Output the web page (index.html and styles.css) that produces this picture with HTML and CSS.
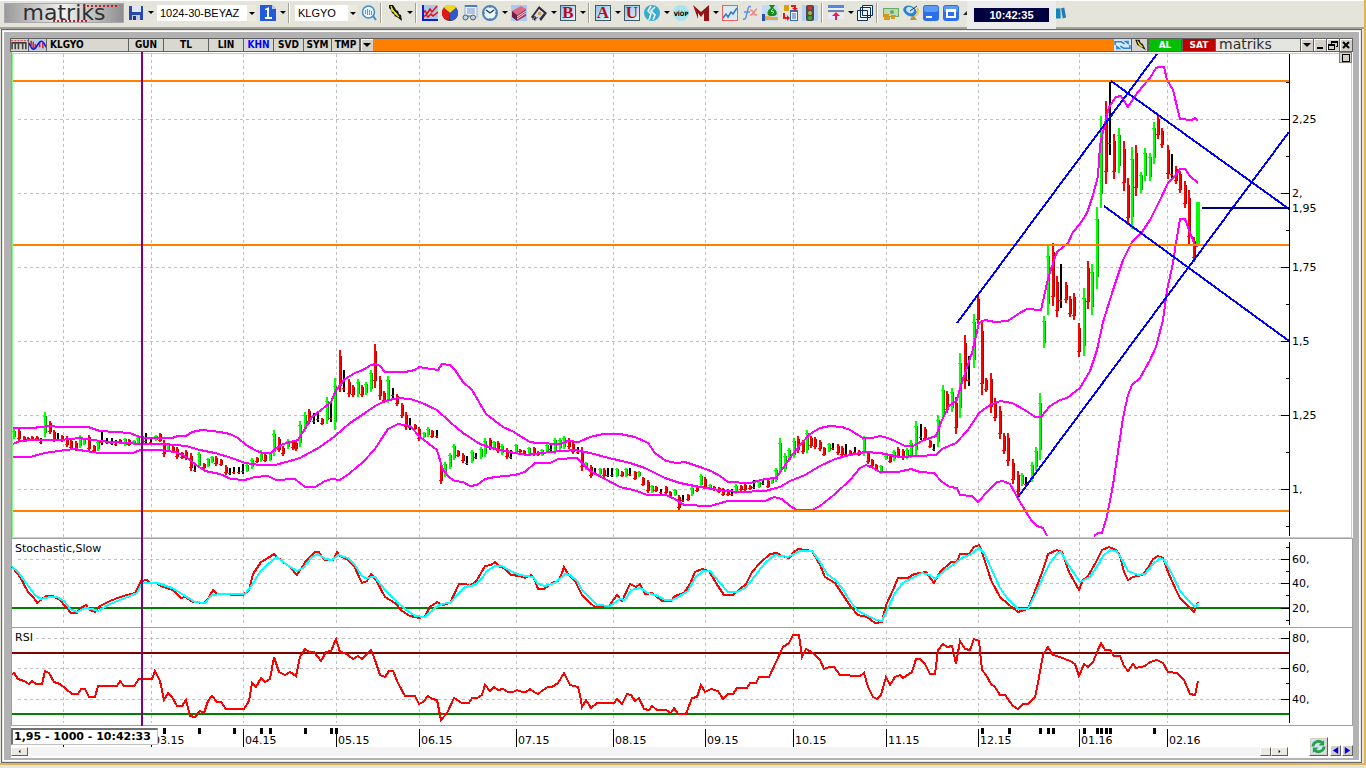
FILE: index.html
```html
<!DOCTYPE html>
<html lang="tr">
<head>
  <meta charset="UTF-8" />
  <title>Matriks - KLGYO</title>
  <link rel="stylesheet" href="styles.css">
</head>
<body>

  <header class="toolbar">
    <div class="logo">matriks</div>
    <button type="button" class="icon" aria-label="Kaydet">
      <svg viewBox="0 0 16 16"><rect x="1" y="1" width="14" height="14" fill="#2848b0"/><rect x="4" y="1" width="9" height="6" fill="#dde6fa"/><rect x="4" y="10" width="8" height="5" fill="#c8ccd8"/><rect x="5" y="11" width="3" height="4" fill="#203878"/></svg>
    </button>
    <button type="button" class="drop" aria-label="Kaydet menüsü"></button>
    <div class="combo combo-page">
      <select aria-label="Sayfa"><option>1024-30-BEYAZ</option></select>
    </div>
    <button type="button" class="icon" aria-label="Sayfa 1">
      <svg viewBox="0 0 16 16"><path d="M0 0h12l4 4v12H0z" fill="#2459d8"/><path d="M12 0l4 4h-4z" fill="#bcd4ff"/><path d="M5 4l4-2v10h3v2H5v-2h2V5H5z" fill="#fff"/></svg>
    </button>
    <button type="button" class="drop" aria-label="Sayfa listesi"></button>
    <span class="sep"></span>
    <div class="combo combo-symbol">
      <select aria-label="Sembol"><option>KLGYO</option></select>
    </div>
    <button type="button" class="icon" aria-label="Ara">
      <svg viewBox="0 0 16 16"><circle cx="7.500" cy="7" r="6" fill="#e8f3fa" stroke="#3a8ed0" stroke-width="1.500"/><path d="M12 11l3 4" stroke="#3a8ed0" stroke-width="2"/><path d="M4.500 5v4M6.500 4v6M8.500 5v5M10.500 6v4" stroke="#e86858"/></svg>
    </button>
    <span class="sep"></span>
    <button type="button" class="icon" aria-label="Hızlı emir">
      <svg viewBox="0 0 16 16"><path d="M2 0h4l2 3 1 2 2 1 1 3 2 1 1 6-5-4-3-1 1-1-3-2-1-3-2-2z" fill="#111"/><path d="M4 1l2 4 3 3 3 4-4-3-1-2-2-1z" fill="#f0e400" stroke="#f0e400"/></svg>
    </button>
    <button type="button" class="drop" aria-label="Emir menüsü"></button>
    <span class="sep"></span>
    <button type="button" class="icon" aria-label="Grafik">
      <svg viewBox="0 0 16 16"><rect width="16" height="16" fill="#a9c8ee"/><path d="M0 9l3-3 2 3 3-5 2 3 5-6" fill="none" stroke="#e01010" stroke-width="1.500"/><path d="M0 13l4-3 2 2 3-3 2 2 5-4" fill="none" stroke="#e01010" stroke-width="1.500"/><path d="M1 0v15h15" fill="none" stroke="#1020d0" stroke-width="2"/></svg>
    </button>
    <button type="button" class="icon" aria-label="Dağılım">
      <svg viewBox="0 0 16 16"><circle cx="8" cy="8" r="8" fill="#333"/><path d="M8 8L2 3a7 7 0 0 1 12 0z" fill="#f2d820"/><path d="M8 8L2 3a7 7 0 0 0 5 12z" fill="#e01818"/><path d="M8 8l6-5a7 7 0 0 1-6 12z" fill="#3058c8"/></svg>
    </button>
    <button type="button" class="icon" aria-label="Haber takip">
      <svg viewBox="0 0 16 16"><rect x="3" width="12" height="12" fill="#edf3fc" stroke="#90aee0"/><path d="M3 1h12" stroke="#4a7ad8" stroke-width="2"/><path d="M5 4h8M5 6h8M5 8h8" stroke="#7a95b8"/><circle cx="3.500" cy="12.500" r="2.500" fill="#bcd4e8" stroke="#53606c"/><circle cx="11" cy="12.500" r="2.500" fill="#bcd4e8" stroke="#53606c"/><path d="M5 11h4" stroke="#53606c"/></svg>
    </button>
    <button type="button" class="icon" aria-label="Saat">
      <svg viewBox="0 0 16 16"><circle cx="8" cy="8" r="7" fill="#e9f5ff" stroke="#4b82b4" stroke-width="2"/><path d="M8 8L4 5M8 8l4-3" stroke="#28425c" stroke-width="1.500"/><path d="M8 2v1M8 13v1M2 8h1M13 8h1" stroke="#28425c"/></svg>
    </button>
    <button type="button" class="drop" aria-label="Saat menüsü"></button>
    <button type="button" class="icon" aria-label="Kitap">
      <svg viewBox="0 0 16 16"><rect width="16" height="16" fill="#a9c8f2"/><path d="M1 6l9-5 5 3-9 6z" fill="#e06880"/><path d="M1 6l5 4v6l-5-4z" fill="#6b1d48"/><path d="M6 10l9-6v7l-9 5z" fill="#b03858"/><path d="M6 12l9-6M6 14l9-6" stroke="#f3d6e0"/></svg>
    </button>
    <button type="button" class="icon" aria-label="Defter">
      <svg viewBox="0 0 16 16"><path d="M0 12L8 1l8 7-6 8-3-4-3 4z" fill="#303038"/><path d="M3 11l5-7 5 4-5 6z" fill="#dcd4ea"/><path d="M7 7h3v3H7z" fill="#c8a060"/><path d="M1 15l4-4M3 16l4-4" stroke="#888"/></svg>
    </button>
    <button type="button" class="drop" aria-label="Defter menüsü"></button>
    <button type="button" class="icon letter">B</button>
    <button type="button" class="drop" aria-label="B menüsü"></button>
    <span class="sep"></span>
    <button type="button" class="icon letter">A</button>
    <button type="button" class="drop" aria-label="A menüsü"></button>
    <button type="button" class="icon letter">U</button>
    <button type="button" class="icon" aria-label="Borsa">
      <svg viewBox="0 0 16 16"><circle cx="8" cy="8" r="8" fill="#36acd0"/><path d="M7 1L4 6l3 3-2 6M11 2L7 6l4 4-2 5" fill="none" stroke="#fff" stroke-width="1.500"/></svg>
    </button>
    <button type="button" class="drop" aria-label="Borsa menüsü"></button>
    <button type="button" class="icon" aria-label="VİOP">
      <svg viewBox="0 0 16 16"><circle cx="8" cy="8" r="8" fill="#a8e4ee"/><text x="8" y="11" text-anchor="middle" class="viop">VİOP</text></svg>
    </button>
    <button type="button" class="icon" aria-label="Matriks">
      <svg viewBox="0 0 16 16"><path d="M0 0l8 7 8-7v16h-5V8l-3 4-3-4v6z" fill="#941418"/></svg>
    </button>
    <button type="button" class="drop" aria-label="Matriks menüsü"></button>
    <button type="button" class="icon" aria-label="Teknik analiz">
      <svg viewBox="0 0 16 16"><rect x=".5" y=".5" width="15" height="15" fill="#dceaf2" stroke="#f06060"/><path d="M1 13l3-4 2 3 3-5 2 2 4-6" fill="none" stroke="#3a78c0" stroke-width="1.500"/></svg>
    </button>
    <button type="button" class="icon" aria-label="Formül">
      <svg viewBox="0 0 16 16"><path d="M9 2C6 0 6 4 5 8s-1 7-4 6M2 7h6" fill="none" stroke="#5b92e0" stroke-width="1.500"/><path d="M8 5c4-1 2 6 7 5M15 4c-2 0-4 7-7 6" fill="none" stroke="#f08080" stroke-width="1.500"/></svg>
    </button>
    <button type="button" class="icon" aria-label="Portföy">
      <svg viewBox="0 0 16 16"><rect width="16" height="16" fill="#c2dcf8"/><path d="M7 0h6l-2 3c5 3 5 8 0 8H8C4 10 5 5 9 3z" fill="#188818"/><path d="M11 4l-2 2 3 1-2 2" fill="none" stroke="#e4f050"/><path d="M0 11h6l4 1h6v3H0z" fill="#e8a848"/><path d="M0 9h3v7H0z" fill="#2850b0"/></svg>
    </button>
    <button type="button" class="icon" aria-label="Aktar">
      <svg viewBox="0 0 16 16"><rect x="8" y="5" width="8" height="11" fill="#3468b8"/><rect x="9" y="7" width="6" height="8" fill="#f4f7ff"/><path d="M10 9h4M10 11h4M10 13h4" stroke="#3468b8"/><path d="M2 1h5M2 3h5M2 5h5" stroke="#d8a010" stroke-width="2"/><path d="M9 1h4v3M2 8v5h3" fill="none" stroke="#e81818" stroke-width="2"/><path d="M5 10l3 3-3 3zM10 3h6l-3 3z" fill="#e81818"/></svg>
    </button>
    <button type="button" class="icon" aria-label="Trafik">
      <svg viewBox="0 0 16 16"><rect width="16" height="16" fill="#b5d2f6"/><rect x="4" width="8" height="16" rx="2" fill="#4e4e48"/><circle cx="8" cy="3" r="2" fill="#e83020"/><circle cx="8" cy="8" r="2" fill="#b0b040"/><circle cx="8" cy="13" r="2" fill="#28b828"/></svg>
    </button>
    <span class="sep"></span>
    <button type="button" class="icon" aria-label="Satır ekle">
      <svg viewBox="0 0 16 16"><path d="M0 0h16v3H0z" fill="#5088e0"/><path d="M0 3h16v2H0z" fill="#e4f0ff"/><path d="M0 5h16v2H0z" fill="#7080b0"/><path d="M0 8h16v6H0z" fill="#e8ecf0"/><path d="M8 7l4 4H9v4H7v-4H4z" fill="#e0205c"/></svg>
    </button>
    <button type="button" class="drop" aria-label="Satır menüsü"></button>
    <button type="button" class="icon" aria-label="Pencereler">
      <svg viewBox="0 0 16 16"><path d="M5.500 .5h10v10h-10zM3.500 2.500h10v10h-10zM.5 5.500h10v10H.5z" fill="#eef6ff" stroke="#0c2c60"/></svg>
    </button>
    <span class="sep"></span>
    <button type="button" class="icon" aria-label="Para">
      <svg viewBox="0 0 16 16"><rect y="3" width="16" height="9" fill="#68a868"/><rect x="1" y="4" width="14" height="7" fill="#bcdcae"/><circle cx="9" cy="7" r="2" fill="#68a868"/><path d="M1 10h5M1 12h6M1 14h6M8 11h5M8 13h4" stroke="#d89820" stroke-width="2"/></svg>
    </button>
    <button type="button" class="icon" aria-label="Çanak">
      <svg viewBox="0 0 16 16"><ellipse cx="7" cy="6" rx="7" ry="5" fill="#2c80d8" transform="rotate(25 7 6)"/><ellipse cx="7" cy="5" rx="4" ry="3" fill="#bce8fc" transform="rotate(25 7 5)"/><path d="M14 1L7 6" stroke="#203858"/><path d="M9 11h2l3 4H7z" fill="#b09450"/><path d="M14 3c2 3 1 6-2 8" fill="none" stroke="#eccc50" stroke-width="2"/></svg>
    </button>
    <button type="button" class="icon" aria-label="Simge durumu">
      <svg viewBox="0 0 16 16"><rect width="16" height="16" rx="3" fill="#2b70ea"/><rect x="1" y="1" width="14" height="6" rx="2" fill="#5c9bf6"/><rect x="3" y="11" width="6" height="2" fill="#fff"/></svg>
    </button>
    <button type="button" class="icon" aria-label="Ekranı kapla">
      <svg viewBox="0 0 16 16"><rect width="16" height="16" rx="3" fill="#2b70ea"/><rect x="1" y="1" width="14" height="6" rx="2" fill="#5c9bf6"/><path d="M3 4h10v9H3z" fill="#fff"/><path d="M5 7h6v4H5z" fill="#2b70ea"/></svg>
    </button>
    <span class="bell"></span>
    <time class="clock"><span>10:42:35</span></time>
    <svg class="books" viewBox="0 0 12 12"><path d="M0 1h5v11H0z" fill="#1684b8"/><path d="M5 1l4-1 2 11-4 1z" fill="#2878b0"/><path d="M5 1l2 11" stroke="#b0dcee"/></svg>
  </header>

  <main class="window">
    <div class="titlebar">
      <button type="button" class="tb-icon" aria-label="Menü">
        <svg viewBox="0 0 16 10"><path d="M1 9V3h6v6M7 3h7v6M4 3v6M11 3v6" fill="none" stroke="#444" stroke-width="1.500"/><path d="M0 1h16" stroke="#d84040" stroke-dasharray="2 1"/></svg>
      </button>
      <button type="button" class="tb-icon" aria-label="Gösterge">
        <svg viewBox="0 0 16 10"><rect width="16" height="10" fill="#b8ccec"/><path d="M2 1v5M4 2v6M6 4v4M10 2v5M13 3v5" stroke="#e02020" stroke-width="1.500"/><path d="M0 3c3 8 5 7 8 2s5-5 8 2" fill="none" stroke="#1818e0" stroke-width="1.500"/></svg>
      </button>
      <button type="button" class="cell cell-symbol">KLGYO</button>
      <button type="button" class="cell">GUN</button>
      <button type="button" class="cell cell-wide">TL</button>
      <button type="button" class="cell">LIN</button>
      <button type="button" class="cell cell-small active">KHN</button>
      <button type="button" class="cell cell-small">SVD</button>
      <button type="button" class="cell cell-tight">SYM</button>
      <button type="button" class="cell cell-tight">TMP</button>
      <button type="button" class="win-btn" aria-label="Diğer"><svg viewBox="0 0 12 10"><path d="M2 3h8L6 7z"/></svg></button>
      <span class="strip"></span>
      <button type="button" class="tb-icon" aria-label="Yenile">
        <svg viewBox="0 0 16 10"><rect width="16" height="10" fill="#d6e8fa"/><path d="M1 5V2h6l3 2M15 5v3H9L6 6" fill="none" stroke="#3088d0" stroke-width="1.500"/><path d="M9 1h5v4zM2 9V5l5 4z" fill="#3088d0"/></svg>
      </button>
      <button type="button" class="tb-icon tb-bolt" aria-label="Emir">
        <svg viewBox="0 0 14 10"><path d="M3 0h4l1 3 2 1 3 6-6-4-2-1z" fill="#111"/><path d="M5 1l2 3 3 3-3-2z" fill="#f0e400" stroke="#f0e400"/></svg>
      </button>
      <button type="button" class="order buy">AL</button>
      <button type="button" class="order sell">SAT</button>
      <span class="brand">matriks</span>
      <button type="button" class="win-btn" aria-label="Liste"><svg viewBox="0 0 12 10"><path d="M2 3h8L6 7z"/></svg></button>
      <button type="button" class="win-btn" aria-label="Küçült"><svg viewBox="0 0 12 10"><path d="M3 7h6v2H3z"/></svg></button>
      <button type="button" class="win-btn" aria-label="Önceki boyut"><svg viewBox="0 0 12 10"><path d="M4 1h7v6H9V6h1V3H5v1H4zM1 4h7v6H1zM2 6v3h5V6z" fill-rule="evenodd"/></svg></button>
      <button type="button" class="win-btn" aria-label="Kapat"><svg viewBox="0 0 12 10"><path d="M3 2l6 6M9 2L3 8" stroke="#000" stroke-width="2"/></svg></button>
    </div>

    <div class="charts">
      <button type="button" class="maximize" aria-label="Paneli büyüt"></button>
      <svg class="panel" id="price" viewBox="11 52 1342 487"></svg>
      <svg class="panel" id="stoch" viewBox="11 539 1342 89"></svg>
      <svg class="panel" id="rsi" viewBox="11 628 1342 98"></svg>
      <svg class="panel" id="months" viewBox="11 726 1342 21"></svg>
      <div class="scroll">
        <button type="button" class="scroll-btn" aria-label="Sola kaydır"><svg viewBox="0 0 8 8"><path d="M5 2v4L3 4z"/></svg></button>
        <div class="track"></div>
        <button type="button" class="thumb" aria-label="Konum"></button>
        <button type="button" class="scroll-btn" aria-label="Sağa kaydır"><svg viewBox="0 0 8 8"><path d="M3 2v4l2-2z"/></svg></button>
        <div class="nav">
          <button type="button" class="refresh" aria-label="Yenile">
            <svg viewBox="0 0 16 16"><rect width="16" height="16" fill="#cfe4f4"/><path d="M2 8a6 6 0 0 1 10-4" fill="none" stroke="#28a048" stroke-width="3"/><path d="M14 8a6 6 0 0 1-10 4" fill="none" stroke="#28a048" stroke-width="3"/><path d="M14 1v6H8zM2 15V9h6z" fill="#28a048"/></svg>
          </button>
          <button type="button" class="nav-btn" aria-label="Geri"><svg viewBox="0 0 10 10"><path d="M8 1v8L2 5z"/></svg></button>
          <button type="button" class="nav-btn" aria-label="İleri"><svg viewBox="0 0 10 10"><path d="M2 1v8l6-4z"/></svg></button>
        </div>
      </div>
      <output class="status">1,95 - 1000 - 10:42:33</output>
    </div>
  </main>

  <script src="chart.js"></script>
</body>
</html>
```

FILE: styles.css
```css
* {
  box-sizing: border-box;
}

body {
  margin: 0;
  background: #e4e4da;
  border-right: 2px solid #e0b25c;
  border-bottom: 2px solid #e0b25c;
  font-family: "DejaVu Sans", Verdana, sans-serif;
}

button {
  margin: 0;
  padding: 0;
  border: none;
  background: none;
  font-family: inherit;
  color: #000;
}

/* toolbar */

.toolbar {
  display: flex;
  align-items: center;
  gap: 4px;
  height: 29px;
  padding: 0 0 3px 4px;
  border-top: 1px solid #fff;
  border-bottom: 2px solid #a2a29a;
}

.logo {
  position: relative;
  width: 120px;
  height: 20px;
  background: linear-gradient(90deg, #9a9a9a, #f2f2f2 50%, #8e8e8e);
  border: 1px solid #a8a8a8;
  color: #303030;
  font-size: 22px;
  line-height: 18px;
  text-align: center;
  flex: none;
}

.logo::before,
.logo::after {
  content: "";
  position: absolute;
  width: 34px;
  border-top: 2px dotted #c81c28;
}

.logo::before {
  top: 1px;
  right: 6px;
}

.logo::after {
  bottom: 0;
  left: 48px;
}

.icon {
  width: 16px;
  height: 16px;
  flex: none;
}

.icon svg {
  display: block;
  width: 16px;
  height: 16px;
}

.letter {
  background: linear-gradient(135deg, #8cc4ec, #e4f8f8);
  border: 1px solid #405868;
  color: #b80c14;
  font-family: "Liberation Serif", serif;
  font-size: 17px;
  font-weight: bold;
  line-height: 14px;
}

.viop {
  font-family: "DejaVu Sans Condensed", sans-serif;
  font-size: 6px;
  font-weight: bold;
}

.drop {
  width: 9px;
  height: 16px;
  margin-left: -4px;
  position: relative;
  flex: none;
}

.drop::after,
.combo::after {
  content: "";
  display: block;
  width: 0;
  border: 3px solid transparent;
  border-top-color: #000;
  border-bottom: none;
}

.drop::after {
  margin-left: 4px;
}

.combo {
  position: relative;
  height: 16px;
  background: #fff;
  flex: none;
}

.combo::after {
  position: absolute;
  right: 1px;
  top: 7px;
}

.combo select {
  display: block;
  appearance: none;
  width: 100%;
  height: 16px;
  padding: 0 10px 0 3px;
  border: none;
  border-radius: 0;
  background: linear-gradient(270deg, #eceade 9px, #fff 9px);
  font-family: "Liberation Sans", Arial, sans-serif;
  font-size: 11px;
  line-height: 16px;
  color: #000;
}

.combo-page {
  width: 99px;
}

.combo-symbol {
  width: 62px;
}

.sep {
  width: 2px;
  height: 20px;
  margin: 0 1px 0 -1px;
  border-left: 1px solid #a0a098;
  border-right: 1px solid #fff;
  flex: none;
}

.bell {
  width: 0;
  border-bottom: 4px solid #222;
  border-left: 4px solid transparent;
}

.clock {
  display: flex;
  align-items: center;
  align-self: flex-start;
  width: 89px;
  height: 28px;
  margin-left: -4px;
  padding: 0 7px;
  background: #ececec;
  z-index: 1;
  flex: none;
}

.clock span {
  width: 100%;
  background: #000040;
  color: #fff;
  font-family: "Liberation Sans", Arial, sans-serif;
  font-size: 11px;
  font-weight: bold;
  line-height: 14px;
  text-align: center;
}

.books {
  width: 11px;
  height: 12px;
  margin-left: -4px;
}

/* chart window */

.window {
  margin: 0 2px 0 1px;
  padding: 8px 8px 4px;
  border: 1px solid #696969;
  background: #b2b2b2;
  box-shadow: inset 0 0 0 1px #e6e6e6, inset 0 0 0 2px #fff;
}

.titlebar {
  display: flex;
  height: 14px;
  border: 1px solid #606060;
  background: #606060;
}

.tb-icon {
  width: 17px;
  background: #d6d3cc;
  margin-right: 1px;
}

.tb-icon svg {
  display: block;
  width: 100%;
  height: 12px;
}

.tb-bolt {
  width: 15px;
}

.cell {
  width: 34px;
  margin-right: 1px;
  background: #d8d8d0;
  font-family: "DejaVu Sans Condensed", Tahoma, sans-serif;
  font-size: 10px;
  font-weight: bold;
  line-height: 12px;
}

.cell-symbol {
  width: 81px;
  padding-left: 3px;
  text-align: left;
}

.cell-wide {
  width: 44px;
}

.cell-small {
  width: 29px;
}

.cell-tight {
  width: 27px;
}

.active {
  color: #00f;
}

.strip {
  flex: 1;
  background: #ff8000;
}

.order {
  width: 32px;
  margin: 0 1px;
  color: #fff;
  font-size: 9px;
  font-weight: bold;
  line-height: 12px;
}

.buy {
  background: #00c000;
}

.sell {
  background: #c00000;
}

.brand {
  width: 84px;
  padding-left: 3px;
  background: #e4e4e0;
  color: #303030;
  font-size: 14px;
  line-height: 11px;
}

.win-btn {
  width: 12px;
  margin-left: 1px;
  background: #d4d0c8;
  box-shadow: inset 1px 1px #fff;
}

.win-btn svg {
  display: block;
  width: 100%;
  height: 12px;
}

.charts {
  position: relative;
  margin: 0 0 0 1px;
  background: #fff;
}

.panel {
  display: block;
  width: 100%;
  height: auto;
  font-size: 11px;
}

.maximize {
  position: absolute;
  right: 1px;
  top: 0;
  width: 13px;
  height: 11px;
  border: 1px solid #808080;
  background: #d4d0c8;
}

.maximize::after {
  content: "";
  display: block;
  width: 6px;
  height: 6px;
  margin: 0 auto;
  border: 1px solid #000;
}

.status {
  position: absolute;
  left: 0;
  bottom: 13px;
  width: 147px;
  height: 17px;
  padding-left: 1px;
  border: 1px solid #c0c0c0;
  border-left: 2px solid #707070;
  border-top: 2px solid #707070;
  background: #fff;
  font-size: 11px;
  font-weight: bold;
  line-height: 14px;
  white-space: nowrap;
}

.scroll {
  display: flex;
  height: 11px;
  padding-bottom: 2px;
}

.scroll-btn,
.thumb,
.nav-btn {
  background: #ece9e4;
  border: 1px solid #fff;
  border-right-color: #606060;
  border-bottom-color: #606060;
}

.scroll-btn {
  width: 17px;
}

.scroll-btn svg {
  display: block;
  height: 7px;
  margin: 0 auto;
}

.thumb {
  width: 11px;
}

.track {
  flex: 1;
  background: #f4f4f4;
}

.nav {
  display: flex;
  align-items: flex-end;
  gap: 1px;
  width: 65px;
  padding-left: 21px;
  position: relative;
  z-index: 1;
}

.refresh {
  width: 19px;
  height: 19px;
  margin-right: 1px;
  padding: 1px;
  border: 1px solid #fff;
  border-right-color: #606060;
  border-bottom-color: #606060;
  background: #d4d0c8;
  flex: none;
}

.refresh svg {
  display: block;
}

.nav-btn {
  width: 11px;
  height: 11px;
  background: #d4d0c8;
  flex: none;
}

.nav-btn svg {
  display: block;
  fill: #0000d8;
}
```

FILE: chart.js
```js
const AXIS = 1289;
const monthMarks = [
  [63, ''], [151, '03.15'], [243, '04.15'], [336, '05.15'], [419, '06.15'],
  [516, '07.15'], [613, '08.15'], [705, '09.15'], [793, '10.15'], [886, '11.15'],
  [978, '12.15'], [1079, '01.16'], [1167, '02.16']
];

// x, high, low, colour
const bars = `14 429 439 g,19 429 441 r,24 436 442 r,28 437 441 r,32 436 441 r,37 436 440 r,41 438 444 k,45 412 437 g,
50 421 434 r,54 430 442 r,58 433 441 k,62 435 442 r,67 436 447 r,71 440 449 r,76 441 451 r,80 435 448 g,84 438 445 g,
89 435 451 r,94 445 452 r,98 440 451 g,102 432 445 k,107 438 444 k,112 438 445 k,116 440 446 k,120 439 444 r,
125 438 446 g,129 439 446 r,134 440 445 g,138 437 444 g,142 434 445 g,146 433 444 k,151 437 444 k,156 435 441 g,
160 433 442 r,164 440 457 r,168 444 451 g,173 446 453 r,177 447 459 r,182 452 459 r,186 450 460 r,191 453 471 r,
195 464 472 k,199 452 468 g,204 463 469 r,208 458 467 g,212 456 463 g,216 456 466 r,221 459 466 r,226 465 475 r,
230 468 475 k,234 467 474 k,239 467 474 k,243 464 474 k,247 464 472 g,252 458 469 g,257 457 463 r,261 450 462 g,
265 454 462 r,270 452 461 g,274 430 456 g,279 437 452 r,283 446 456 r,288 439 449 g,293 440 450 r,296 441 451 r,
300 421 447 g,305 412 432 g,309 409 424 r,314 413 424 k,318 412 422 k,322 418 425 r,327 397 424 g,331 403 422 k,
335 378 430 g,340 350 392 r,344 370 392 k,349 379 397 r,353 385 397 r,358 379 397 g,362 385 397 r,366 382 395 g,
371 370 392 g,375 344 388 r,380 376 400 r,384 391 403 r,388 376 403 g,393 388 398 k,397 394 406 r,402 403 418 r,
406 412 430 r,410 418 430 k,415 424 430 r,419 427 441 r,424 432 438 g,428 427 437 g,432 430 438 r,437 430 438 k,
441 463 484 r,445 462 477 g,450 453 469 g,454 444 460 g,458 450 457 r,463 453 463 r,467 456 465 k,472 450 463 g,
476 453 459 k,481 447 459 g,485 438 457 g,490 438 450 r,494 441 450 g,498 441 453 r,502 444 455 g,507 448 459 r,
511 450 459 k,516 444 453 g,520 449 453 r,524 450 455 r,529 447 455 g,534 447 456 r,538 451 456 r,542 449 456 g,
547 443 453 g,551 443 451 k,555 438 454 g,560 438 450 g,564 436 449 g,569 438 449 r,573 442 454 r,578 447 454 k,
582 447 471 r,586 462 470 g,591 465 478 r,595 468 475 k,600 468 475 g,604 468 478 r,608 468 477 k,612 468 477 k,
617 468 477 g,622 471 477 r,626 468 477 g,630 468 476 k,635 471 480 r,639 471 477 g,643 477 486 r,648 480 493 r,
652 485 493 g,656 486 492 r,661 489 494 k,666 486 494 r,670 491 498 r,675 489 496 g,679 495 510 r,683 495 502 k,
688 494 501 r,692 486 496 g,697 486 492 r,701 474 487 g,705 477 489 r,710 484 489 g,714 486 491 r,719 487 493 r,
723 488 496 r,728 489 496 r,732 489 496 k,736 484 494 g,741 485 491 r,745 484 491 r,750 485 490 r,754 480 489 k,
759 481 488 g,763 480 485 k,768 480 488 r,772 477 484 g,776 468 482 g,780 438 474 g,785 453 472 g,789 448 462 g,
794 438 458 g,798 436 453 r,803 440 454 r,807 430 453 g,811 436 448 r,815 437 449 r,820 440 451 r,824 447 456 r,
829 443 452 g,833 443 450 k,838 444 455 r,842 446 457 r,846 444 457 k,850 450 456 r,855 447 454 k,859 450 456 r,
864 436 456 g,868 451 464 r,872 459 467 r,876 464 471 r,881 465 474 g,886 455 460 g,890 455 463 r,894 450 461 g,
898 447 458 r,903 449 460 r,907 448 459 g,911 440 458 g,916 421 455 g,921 424 440 k,925 427 441 r,930 440 448 r,
934 444 451 k,938 415 447 g,943 385 418 g,947 391 413 r,952 388 412 g,956 397 434 r,960 353 418 g,965 335 389 r,
969 356 386 k,974 314 368 g,978 295 324 r,982 320 395 r,986 378 392 r,991 373 413 r,995 398 421 r,1000 406 439 r,
1004 433 454 r,1008 433 466 r,1013 459 484 r,1018 471 496 r,1022 473 486 g,1026 477 487 k,1032 462 482 g,
1036 447 471 g,1040 393 460 g,1044 316 348 g,1048 245 315 g,1053 243 306 r,1057 276 317 r,1061 264 308 k,
1066 282 303 r,1070 296 317 r,1074 293 320 r,1079 323 357 r,1084 288 356 g,1088 261 309 r,1092 264 315 g,
1097 207 289 g,1101 116 208 g,1106 101 184 r,1110 81 155 k,1114 134 179 r,1119 128 173 g,1124 141 191 r,
1128 178 225 r,1132 147 229 g,1136 145 196 r,1141 172 193 g,1145 148 181 g,1150 153 181 g,1154 122 164 g,
1158 115 139 r,1162 128 148 r,1168 145 179 r,1172 154 179 k,1176 166 184 r,1180 171 193 r,1185 181 208 r,
1189 190 245 r,1194 237 262 r`;

const bollinger = [
  `13,428 32,428 50,426 60,427 88,427 100,431 130,433 142,438 172,438 178,436 186,436 192,432 202,430 220,432 230,434
  238,438 246,445 255,450 262,453 271,453 275,449 283,444 298,440 304,430 312,417 321,410 331,402 336,390 345,379
  355,373 363,370 371,365 376,364 380,366 385,372 405,372 415,370 419,367 425,368 438,370 442,364 450,365 455,370
  463,382 472,390 486,414 503,427 512,431 530,442 537,443 560,444 568,441 579,442 590,437 603,434 620,434 635,437
  648,443 655,453 666,461 677,463 685,462 700,467 711,471 720,476 728,482 750,483 765,479 776,478 783,468 790,458
  800,445 810,434 820,428 830,426 842,427 850,430 863,438 872,438 880,436 888,438 895,441 905,446 913,446 922,441
  930,438 936,436 942,420 949,406 957,400 961,385 972,353 979,323 985,320 995,322 1008,321 1018,314 1027,309
  1041,310 1047,283 1050,272 1057,252 1068,243 1073,232 1080,224 1087,213 1093,195 1098,176 1100,145 1104,128
  1109,107 1116,97 1121,96 1128,107 1135,96 1143,86 1150,78 1156,68 1159,67 1164,67 1167,80 1173,90 1180,119
  1192,120 1195,118 1198,121`,
  `13,444 20,441 35,440 60,440 80,438 100,441 125,443 142,444 165,444 186,446 200,450 215,453 232,458 245,463 260,465
  275,465 290,461 300,458 320,447 335,436 350,423 365,413 375,406 385,401 398,398 410,399 420,402 437,410 450,422
  463,433 480,444 495,449 515,453 527,455 550,452 575,450 590,453 605,457 630,463 645,468 665,478 680,483 700,487
  725,491 740,492 765,491 780,487 790,481 805,475 820,466 835,459 850,455 865,452 880,453 900,457 936,455 942,449
  956,443 968,430 979,413 990,405 1000,401 1012,403 1025,410 1035,417 1041,417 1050,406 1060,400 1067,398 1080,388
  1090,371 1097,350 1103,322 1113,290 1123,260 1132,242 1142,232 1150,220 1160,200 1168,183 1175,176 1180,169
  1185,169 1190,176 1198,183`,
  `13,457 30,457 45,453 65,450 75,449 85,451 100,453 133,453 140,450 160,450 175,452 185,456 195,464 205,471 220,474
  231,479 245,480 255,477 268,476 276,480 295,479 305,487 315,487 325,481 332,479 340,480 350,473 363,462 375,449
  382,438 388,429 398,424 410,426 420,437 437,450 443,470 450,478 455,481 463,482 470,486 477,485 485,479 495,477
  515,475 525,472 535,463 550,463 558,459 577,458 590,471 605,479 620,487 637,491 647,495 666,495 675,499 684,505
  710,506 728,501 765,501 774,497 782,499 790,506 797,510 812,510 820,506 835,494 850,480 860,468 866,465 873,468
  880,472 898,472 911,469 920,472 934,473 942,482 950,487 957,488 960,495 972,496 978,502 988,491 997,482 1003,481
  1010,484 1020,502 1031,520 1037,526 1043,528 1047,536`,
  `1094,536 1098,533 1102,533 1107,516 1113,485 1119,445 1123,418 1128,395 1132,385 1140,378 1150,360 1156,347
  1163,320 1167,290 1173,263 1176,243 1180,219 1185,219 1190,233 1195,245 1198,246`
];

const stochK = `12,567 20,577 28,592 34,598 37,603 42,599 46,596 53,596 60,600 65,606 71,613 77,613 80,608 86,605 90,610
  95,612 100,606 110,601 120,597 127,595 135,593 141,581 147,580 150,583 156,583 163,587 173,590 181,598 185,597
  193,602 204,603 208,599 213,590 217,594 243,595 249,590 253,574 261,562 268,558 274,554 283,562 290,567 297,575
  306,561 315,552 319,552 322,557 325,560 333,560 337,552 340,556 348,560 354,566 362,583 367,581 371,574 376,580
  385,597 395,603 402,611 410,616 420,618 425,616 430,607 437,602 443,605 450,603 459,584 466,584 470,586 477,580
  485,566 491,565 495,562 500,567 504,568 511,575 520,576 525,578 531,575 535,580 538,589 544,589 552,583 558,581
  562,573 564,567 568,574 575,581 582,595 590,603 595,607 609,606 617,595 622,601 630,584 636,587 640,584 645,594
  652,593 662,601 671,601 675,596 684,593 690,584 695,572 702,569 709,571 716,583 724,595 733,595 740,589 746,584
  752,572 760,563 770,554 777,553 782,556 789,558 794,552 798,549 812,551 820,565 825,577 835,583 843,595 851,607
  858,615 867,617 875,623 882,622 886,605 893,590 898,578 908,578 914,574 926,572 934,583 940,572 951,562 957,562
  960,554 969,554 974,547 979,545 982,552 991,580 1000,597 1008,604 1018,612 1028,609 1035,591 1043,570 1048,554
  1057,550 1062,552 1069,572 1079,590 1083,580 1088,576 1096,562 1102,550 1109,547 1116,550 1120,556 1124,572
  1128,580 1133,577 1142,575 1148,568 1153,559 1158,556 1163,558 1168,572 1176,590 1180,598 1190,608 1194,612
  1198,602`;

const stochD = `12,567 18,572 26,583 35,595 41,599 50,597 57,597 64,601 70,609 77,612 85,608 92,609 98,611 110,604
  125,598 137,593 142,583 150,583 157,583 172,588 182,594 195,602 205,603 212,595 222,594 245,594 252,585 260,572
  268,564 277,557 287,565 297,571 303,568 312,557 318,554 325,559 332,560 338,555 348,558 355,565 361,575 365,578
  375,577 385,590 395,600 405,609 415,616 425,617 435,608 441,604 450,603 459,593 465,587 475,585 482,578 487,571
  495,566 502,566 512,572 520,575 533,577 538,584 545,586 555,583 565,574 570,575 578,582 582,590 590,598 597,605
  610,606 620,599 625,600 631,590 640,588 648,593 658,596 665,600 672,600 680,596 688,591 695,578 703,571 710,571
  720,583 728,592 737,592 745,588 755,576 765,563 775,555 788,557 800,551 812,551 820,562 827,574 835,580 842,588
  850,601 858,611 868,616 876,620 882,621 888,608 895,593 903,583 912,578 922,573 930,575 935,579 945,570 956,563
  963,557 970,555 979,548 984,553 991,568 1000,588 1008,599 1018,609 1028,609 1035,595 1043,577 1050,563 1058,553
  1061,552 1066,561 1073,572 1080,582 1090,577 1098,565 1103,556 1110,550 1116,551 1120,556 1128,571 1138,575
  1145,574 1152,565 1160,558 1164,560 1172,574 1180,591 1188,600 1195,607 1198,604`;

const rsiLine = `12,674 14,673 18,679 24,681 29,684 32,681 36,684 42,684 45,671 49,673 54,682 60,684 66,689 72,694 78,694
  81,689 85,689 89,697 95,697 98,686 117,686 120,681 124,686 134,686 139,679 152,679 155,671 160,681 164,700 168,693
  172,697 177,706 182,706 186,700 190,716 195,717 200,711 204,713 208,701 212,696 217,702 221,702 226,709 244,709
  249,701 252,683 256,687 261,678 265,682 270,679 274,657 279,672 285,675 290,672 296,676 300,657 305,649 309,652
  314,652 321,661 326,652 331,651 336,639 340,652 345,653 353,659 358,656 362,659 371,650 375,660 380,675 385,677
  389,671 393,671 398,683 405,696 415,696 419,704 423,702 428,696 432,699 437,700 441,720 447,713 454,698 462,703
  469,703 472,698 477,698 482,695 485,685 490,691 494,687 498,690 503,689 508,692 513,692 517,690 522,692 526,692
  530,689 534,692 538,694 543,690 548,687 552,687 558,683 564,673 570,685 578,687 580,695 582,707 586,700 591,708
  597,703 614,703 617,699 622,704 627,694 631,695 635,701 639,698 644,709 649,710 652,706 657,710 666,710 671,713
  674,708 678,714 686,714 692,698 697,697 701,685 705,692 711,689 718,691 723,699 728,694 733,694 737,688 747,688
  750,683 756,683 759,677 769,677 777,660 783,647 789,643 793,635 799,635 802,657 806,649 813,653 820,660 824,669
  829,667 834,667 840,675 860,676 864,673 868,687 873,697 877,699 881,695 886,677 890,685 895,677 900,675 903,678
  912,672 916,659 920,659 925,664 930,674 935,674 938,650 943,644 947,647 952,646 956,664 960,641 965,649 970,650
  974,639 979,641 982,670 986,675 991,684 995,687 1000,695 1005,695 1013,706 1018,709 1023,704 1028,704 1035,697
  1037,688 1043,655 1048,647 1053,655 1060,657 1070,661 1075,664 1079,676 1084,664 1088,667 1093,662 1097,652
  1101,643 1105,650 1110,650 1114,656 1120,656 1124,666 1128,671 1133,664 1136,668 1145,666 1150,662 1157,660
  1163,663 1168,672 1177,673 1184,680 1190,694 1195,695 1198,681`;

const line = (x1, y1, x2, y2, color, width = 1, extra = '') =>
  `<line x1="${x1}" y1="${y1}" x2="${x2}" y2="${y2}" stroke="${color}" stroke-width="${width}" ${extra}/>`;

const rect = (x, y, w, h, color) =>
  `<rect x="${x}" y="${y}" width="${w}" height="${h}" fill="${color}"/>`;

const poly = (points, color) =>
  `<polyline points="${points}" fill="none" stroke="${color}" stroke-width="2"/>`;

const text = (x, y, value) => `<text x="${x}" y="${y}">${value}</text>`;

const sharp = (content) => `<g shape-rendering="crispEdges">${content}</g>`;

function grid(top, bottom, rows) {
  const dash = 'stroke-dasharray="3 3"';
  return rows.map(y => line(18, y + 0.5, AXIS - 8, y + 0.5, '#c0c0c0', 1, dash)).join('') +
    monthMarks.map(([x]) => line(x + 0.5, top, x + 0.5, bottom, '#c0c0c0', 1, dash)).join('');
}

function axis(top, bottom, major, minor) {
  return rect(AXIS, top, 1, bottom - top, '#000') +
    major.map(y => rect(AXIS - 8, y, 8, 1, '#000')).join('') +
    minor.map(y => rect(AXIS - 3, y, 3, 1, '#000')).join('');
}

function drawBars() {
  const colors = { r: ['#f00', '#a80000'], g: ['#0f0', '#009c00'], k: ['#000', '#000'] };
  return bars.split(',').map(item => {
    const [x, high, low, key] = item.trim().split(' ');
    const top = Number(high);
    const height = low - high;
    const pad = Math.round(height * 0.15);
    const [light, dark] = colors[key];
    const close = key === 'g' ? top + pad : Number(low) - pad - 1;
    let out = rect(x - 1, top, 2, height, light);
    if (key !== 'k') {
      out += rect(Number(x) + 1, top + pad, 1, height - pad * 2, dark);
    }
    return out + rect(x - 2, close, 3, 1, key === 'g' ? '#0f0' : '#f00');
  }).join('');
}

const priceRows = [119, 193, 267, 341, 415, 489];

document.getElementById('price').innerHTML = sharp(
  rect(11, 52, 1, 487, '#a0a0a0') + rect(12, 53, 1340, 1, '#80ff80') +
  rect(12, 53, 1, 485, '#80ff80') + rect(1351, 53, 1, 485, '#80ff80') +
  rect(12, 537, 1340, 1, '#80ff80') + rect(11, 538, 1342, 1, '#a0a0a0') +
  grid(54, 537, priceRows) +
  drawBars() +
  rect(1196, 202, 4, 43, '#0f0') +
  bollinger.map(points => poly(points, '#f0f')).join('') +
  rect(13, 80, AXIS - 13, 2, '#ff8000') + rect(13, 244, AXIS - 13, 2, '#ff8000') +
  rect(13, 510, AXIS - 13, 2, '#ff8000') +
  line(957, 323, 1157, 54, '#00f', 2) + line(1111, 81, 1289, 209, '#00f', 2) +
  line(1104, 206, 1289, 341, '#00f', 2) + line(1018, 497, 1289, 132, '#00f', 2) +
  rect(1202, 207, 87, 2, '#000080') +
  rect(141, 52, 2, 487, '#800080') +
  axis(54, 536, priceRows, [82, 156, 230, 304, 378, 452, 526])
) + ['2,25', '2,', '1,75', '1,5', '1,25', '1,'].map((t, i) => text(1292, priceRows[i] + 4, t)).join('') +
  text(1292, 212, '1,95');

document.getElementById('stoch').innerHTML = sharp(
  rect(11, 539, 1, 89, '#a0a0a0') + rect(1352, 539, 1, 89, '#a0a0a0') + rect(11, 627, 1342, 1, '#a0a0a0') +
  grid(542, 626, [559, 583]) +
  rect(12, 607, AXIS - 12, 2, '#008000') +
  poly(stochK, '#f00') + poly(stochD, '#0ff') +
  rect(141, 539, 2, 89, '#800080') +
  axis(542, 625, [559, 583, 608], [547, 571, 595, 620])
) + text(15, 552, 'Stochastic,Slow') + text(1292, 563, '60,') + text(1292, 587, '40,') + text(1292, 612, '20,');

document.getElementById('rsi').innerHTML = sharp(
  rect(11, 628, 1, 98, '#a0a0a0') + rect(1352, 628, 1, 98, '#a0a0a0') + rect(11, 725, 1342, 1, '#a0a0a0') +
  grid(631, 723, [638, 668, 699]) +
  rect(12, 652, AXIS - 12, 2, '#800000') + rect(12, 713, AXIS - 12, 2, '#008000') +
  poly(rsiLine, '#f00') +
  rect(141, 628, 2, 98, '#800080') +
  axis(631, 723, [638, 668, 699], [683])
) + rect(14, 631, 21, 12, '#fff') + text(15, 641, 'RSI') +
  text(1292, 642, '80,') + text(1292, 672, '60,') + text(1292, 703, '40,');

const events = [44, 53, 102, 106, 150, 154, 163, 198, 233, 260, 269, 304, 330, 335,
  981, 1008, 1039, 1047, 1052, 1083, 1096, 1100, 1105, 1109, 1153];

document.getElementById('months').innerHTML = sharp(
  events.map(x => rect(x, 728, 3, 6, '#000')).join('') +
  monthMarks.map(([x]) => rect(x, 729, 1, 18, '#000')).join('')
) + monthMarks.map(([x, label]) => text(x + 2, 744, label)).join('');
```
